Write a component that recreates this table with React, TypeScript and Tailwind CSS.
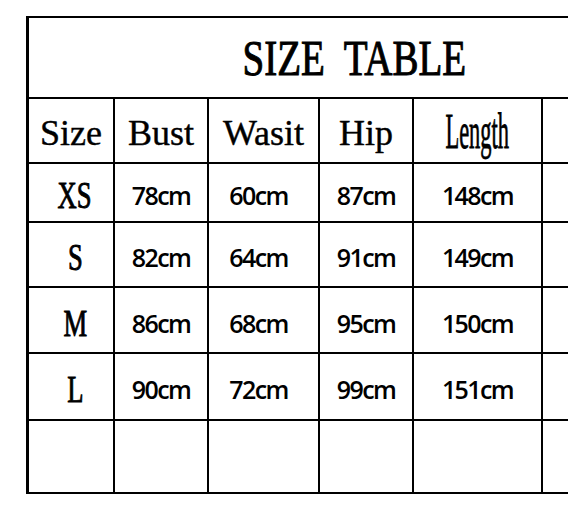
const header = ["Size", "Bust", "Wasit", "Hip"];

const rows: { size: string; vals: string[] }[] = [
  { size: "XS", vals: ["78cm", "60cm", "87cm", "148cm"] },
  { size: "S", vals: ["82cm", "64cm", "91cm", "149cm"] },
  { size: "M", vals: ["86cm", "68cm", "95cm", "150cm"] },
  { size: "L", vals: ["90cm", "72cm", "99cm", "151cm"] },
];

const serif = "font-['Liberation_Serif',serif]";
const sans = "font-['Open_Sans',sans-serif]";

function Cell({ children, className = "" }: { children?: React.ReactNode; className?: string }) {
  return <div className={`bg-white flex items-center justify-center ${className}`}>{children}</div>;
}

export default function App() {
  return (
    <div className="w-[568px] h-[509px] bg-white overflow-hidden pt-4 pl-[26px]">
      <div className="w-[656px] bg-black pl-[3px] pt-[2px] pb-[2px] grid gap-[2px] grid-cols-[84px_92px_109px_92px_127px_137px] grid-rows-[79px_63px_57px_63px_64px_65px_71px] text-black">
        {/* title */}
        <Cell className="col-span-6">
          <span className={`inline-block ${serif} text-[50px] leading-none scale-x-[0.78] whitespace-pre [-webkit-text-stroke:1px_black]`}>
            SIZE  TABLE
          </span>
        </Cell>

        {/* header row */}
        {header.map((h) => (
          <Cell key={h} className="pt-[4px]">
            <span className={`${serif} text-[36px] leading-none [-webkit-text-stroke:0.4px_black]`}>{h}</span>
          </Cell>
        ))}
        <Cell className="pt-[2px]">
          <span className={`inline-block ${serif} text-[51px] leading-none scale-x-[0.44] [-webkit-text-stroke:0.8px_black]`}>
            Length
          </span>
        </Cell>
        <Cell />

        {rows.map((r) => (
          <div key={r.size} className="contents">
            <Cell className="pl-[8px] pt-[6px]">
              <span className={`inline-block ${serif} text-[37px] leading-none scale-x-[0.72] [-webkit-text-stroke:0.9px_black]`}>
                {r.size}
              </span>
            </Cell>
            {r.vals.map((v, i) => (
              <Cell key={i} className={`pt-[6px] ${i === 1 ? "pr-[10px]" : ""}`}>
                <span className={`${sans} font-semibold text-[25px] leading-none tracking-[-1.6px]`}>{v}</span>
              </Cell>
            ))}
            <Cell />
          </div>
        ))}

        {/* empty last row */}
        {Array.from({ length: 6 }).map((_, i) => (
          <Cell key={i} />
        ))}
      </div>
    </div>
  );
}
